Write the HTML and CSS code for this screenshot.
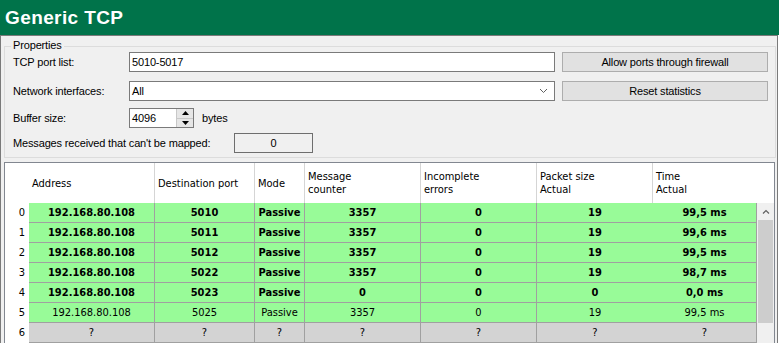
FILE: index.html
```html
<!DOCTYPE html>
<html lang="en">
<head>
    <meta charset="UTF-8">
    <title>Generic TCP</title>
    <link rel="stylesheet" href="styles.css">
</head>
<body>
    <div class="title">Generic TCP</div>
    <div class="panel">
        <div class="group">
            <span class="legend">Properties</span>
            <div class="field-row row-ports">
                <label class="field-label">TCP port list:</label>
                <div class="textbox">5010-5017</div>
                <div class="btn">Allow ports through firewall</div>
            </div>
            <div class="field-row row-iface">
                <label class="field-label">Network interfaces:</label>
                <div class="textbox combo">
                    <span>All</span>
                    <svg class="chevron" width="9" height="6" viewBox="0 0 9 6"><polyline points="1,1 4.5,4.5 8,1" fill="none" stroke="#606060" stroke-width="1"/></svg>
                </div>
                <div class="btn">Reset statistics</div>
            </div>
            <div class="field-row row-buffer">
                <label class="field-label">Buffer size:</label>
                <div class="spin-wrap">
                    <div class="textbox spin">
                        <span>4096</span>
                        <div class="spin-btns">
                            <div class="spin-up"><svg width="7" height="4" viewBox="0 0 7 4"><polygon points="0,4 3.5,0 7,4" fill="#000"/></svg></div>
                            <div class="spin-down"><svg width="7" height="4" viewBox="0 0 7 4"><polygon points="0,0 3.5,4 7,0" fill="#000"/></svg></div>
                        </div>
                    </div>
                    <span class="unit">bytes</span>
                </div>
            </div>
            <div class="mapped-row">
                <label class="mapped-label">Messages received that can't be mapped:</label>
                <div class="readout">0</div>
            </div>
        </div>

        <div class="table">
            <div class="grid" id="grid">
                <div class="scroll">
                    <div class="scroll-up"><svg width="8" height="5" viewBox="0 0 8 5"><polyline points="1,4.5 4,1.5 7,4.5" fill="none" stroke="#606060" stroke-width="1.2"/></svg></div>
                    <div class="scroll-thumb"></div>
                </div>
            </div>
        </div>
    </div>
    <script>
        const headers = ['Address', 'Destination port', 'Mode', 'Message<br>counter', 'Incomplete<br>errors', 'Packet size<br>Actual', 'Time<br>Actual'];
        const rows = [
            ['192.168.80.108', '5010', 'Passive', '3357', '0', '19', '99,5 ms'],
            ['192.168.80.108', '5011', 'Passive', '3357', '0', '19', '99,6 ms'],
            ['192.168.80.108', '5012', 'Passive', '3357', '0', '19', '99,5 ms'],
            ['192.168.80.108', '5022', 'Passive', '3357', '0', '19', '98,7 ms'],
            ['192.168.80.108', '5023', 'Passive', '0', '0', '0', '0,0 ms'],
            ['192.168.80.108', '5025', 'Passive', '3357', '0', '19', '99,5 ms'],
            ['?', '?', '?', '?', '?', '?', '?']
        ];

        function rowClass(index) {
            if (index < 5) return 'cell ok bold';
            if (index === 5) return 'cell ok';
            return 'cell unknown';
        }

        let html = '<div class="corner"></div>';
        html += headers.map(text => `<div class="head">${text}</div>`).join('');
        html += '<div class="head-blank"></div>';
        rows.forEach((row, index) => {
            html += `<div class="rownum">${index}</div>`;
            html += row.map(text => `<div class="${rowClass(index)}">${text}</div>`).join('');
        });
        document.getElementById('grid').insertAdjacentHTML('beforeend', html);
    </script>
</body>
</html>
```

FILE: styles.css
```css
html, body {
    margin: 0;
    padding: 0;
    background: #fff;
    overflow: hidden;
}
body {
    width: 779px;
    height: 343px;
}

.title {
    height: 35px;
    line-height: 35px;
    padding-left: 5px;
    background: #00734a;
    color: #fff;
    font-family: "Liberation Sans", Arial, sans-serif;
    font-size: 19px;
    font-weight: bold;
    letter-spacing: 0.4px;
}

.panel {
    width: 778px;
    height: 320px;
    box-sizing: border-box;
    border: 1px solid #7a7a7a;
    border-bottom: none;
    background: #f0f0f0;
    font-family: "Liberation Sans", Arial, sans-serif;
    font-size: 11px;
    letter-spacing: -0.15px;
    color: #000;
    overflow: hidden;
}

/* group box */
.group {
    position: relative;
    width: 772px;
    height: 112px;
    box-sizing: border-box;
    margin: 10px 0 0 3px;
    border: 1px solid #dcdcdc;
    padding: 5px 0 0 8px;
}
.legend {
    position: absolute;
    left: 6px;
    top: -8px;
    padding: 0 2px;
    line-height: 13px;
    background: #f0f0f0;
}

.field-row {
    display: grid;
    grid-template-columns: 109px 426px 206px;
    column-gap: 7px;
    height: 20px;
}
.row-iface { margin-top: 9px; }
.row-buffer { margin-top: 7px; }
.field-label {
    align-self: center;
}

.textbox {
    height: 20px;
    box-sizing: border-box;
    border: 1px solid #7a7a7a;
    background: #fff;
    padding: 0 2px;
    line-height: 18px;
}
.combo {
    display: flex;
    justify-content: space-between;
    align-items: center;
    padding-right: 6px;
}
.chevron {
    display: block;
}

.btn {
    height: 20px;
    box-sizing: border-box;
    border: 1px solid #adadad;
    background: #e1e1e1;
    text-align: center;
    line-height: 18px;
}

.spin-wrap {
    display: flex;
    align-items: center;
    gap: 8px;
}
.spin {
    width: 65px;
    display: flex;
    justify-content: space-between;
    padding-right: 0;
}
.spin-btns {
    display: flex;
    flex-direction: column;
    width: 16px;
    margin: 0;
    border-left: 1px solid #c8c8c8;
}
.spin-up, .spin-down {
    height: 9px;
    background: #e6e6e6;
    display: flex;
    align-items: center;
    justify-content: center;
}
.spin-up {
    border-bottom: 1px solid #c8c8c8;
}
.spin-btns svg {
    display: block;
}
.unit {
    line-height: 20px;
}

.mapped-row {
    display: flex;
    align-items: center;
    margin-top: 5px;
    height: 20px;
}
.mapped-label {
    width: 221px;
}
.readout {
    width: 79px;
    height: 20px;
    box-sizing: border-box;
    border: 1px solid #6e6e6e;
    text-align: center;
    line-height: 18px;
}

/* data grid */
.table {
    width: 771px;
    margin: 4px 0 0 3px;
    border: 1px solid #828790;
    border-bottom: none;
    box-sizing: border-box;
    background: #fff;
    font-family: "DejaVu Sans Condensed", "DejaVu Sans", sans-serif;
    font-size: 11px;
    letter-spacing: 0;
}
.grid {
    display: grid;
    grid-template-columns: 24px 126px 100px 50px 116px 116px 116px 104px 17px;
    grid-template-rows: 40px repeat(7, 20px);
}
.corner, .head-blank {
    background: #fff;
}
.head {
    display: flex;
    align-items: center;
    padding-left: 3px;
    line-height: 13px;
    border-right: 1px solid #d5d5d5;
    background: #fff;
}
.head:nth-child(9) {
    border-right: none;
}
.rownum {
    text-align: right;
    padding-right: 4px;
    line-height: 20px;
    background: #fff;
}
.cell {
    box-sizing: border-box;
    border-right: 1px solid #a0a0a0;
    border-bottom: 1px solid #a0a0a0;
    text-align: center;
    line-height: 19px;
    white-space: nowrap;
}
.cell:nth-child(8n + 1) {
    border-right: none;
}
.ok {
    background: #98fb98;
}
.bold {
    font-weight: bold;
}
.unknown {
    background: #d3d3d3;
}

.scroll {
    grid-column: 9;
    grid-row: 2 / 9;
    background: #f0f0f0;
}
.scroll-up {
    height: 17px;
    display: flex;
    align-items: center;
    justify-content: center;
}
.scroll-up svg {
    display: block;
}
.scroll-thumb {
    height: 103px;
    margin: 0 1px;
    background: #cdcdcd;
}
```
